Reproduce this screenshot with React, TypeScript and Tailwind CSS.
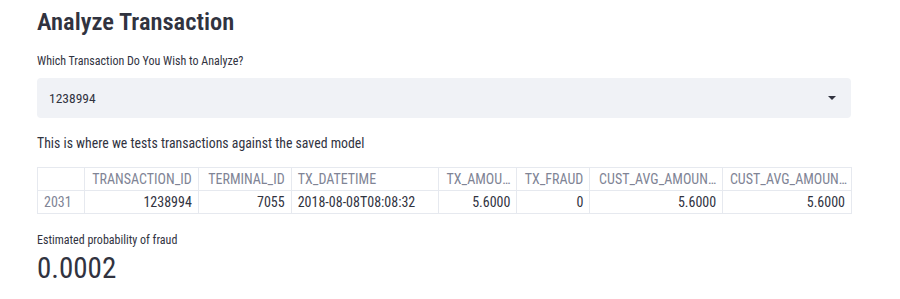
const columns = [
  { name: "", width: 46, align: "left" },
  { name: "TRANSACTION_ID", width: 114, align: "right" },
  { name: "TERMINAL_ID", width: 93, align: "right" },
  { name: "TX_DATETIME", width: 147, align: "left" },
  { name: "TX_AMOU…", width: 79, align: "right" },
  { name: "TX_FRAUD", width: 73, align: "right" },
  { name: "CUST_AVG_AMOUN…", width: 133, align: "right" },
  { name: "CUST_AVG_AMOUN…", width: 129, align: "right" },
];

const row = ["2031", "1238994", "7055", "2018-08-08T08:08:32", "5.6000", "0", "5.6000", "5.6000"];

export default function App() {
  return (
    <div className="w-[900px] h-[299px] bg-white text-[#31333f] font-['Roboto_Condensed',sans-serif] px-[37px] pt-[7px] overflow-hidden">
      <h2 className="text-[24.5px] font-semibold leading-[30px]">Analyze Transaction</h2>

      <label className="block mt-[16px] text-[12px] leading-[16px]">Which Transaction Do You Wish to Analyze?</label>
      <div className="mt-[9px] w-[814px] h-[40px] bg-[#f0f2f6] rounded-[4px] flex items-center justify-between pl-[12px] pr-[14px]">
        <span className="text-[13.5px]">1238994</span>
        <svg width="10" height="6" viewBox="0 0 10 6">
          <path d="M1 1h8L5 5z" fill="#31333f" />
        </svg>
      </div>

      <p className="mt-[15px] text-[13.8px] leading-[20px]">This is where we tests transactions against the saved model</p>

      <div className="mt-[14px] w-[815px] border border-[#e6e9ef] text-[14px] leading-[22px]">
        <div className="flex border-b border-[#e6e9ef] text-[#808495]">
          {columns.map((c, i) => (
            <div
              key={i}
              style={{ width: c.width }}
              className={`px-[6px] truncate ${i > 0 ? "border-l border-[#e6e9ef]" : ""} ${c.align === "right" ? "text-right" : "text-left"} ${i === 7 ? "pr-[4px] pl-[5px]" : ""}`}
            >
              {c.name}
            </div>
          ))}
        </div>
        <div className="flex">
          {columns.map((c, i) => (
            <div
              key={i}
              style={{ width: c.width }}
              className={`px-[6px] truncate ${i > 0 ? "border-l border-[#e6e9ef]" : "text-[#808495]"} ${c.align === "right" ? "text-right" : "text-left"}`}
            >
              {row[i]}
            </div>
          ))}
        </div>
      </div>

      <div className="mt-[18px] text-[12px] leading-[16px]">Estimated probability of fraud</div>
      <div className="mt-[3px] text-[29px] leading-[34px]">0.0002</div>
    </div>
  );
}
